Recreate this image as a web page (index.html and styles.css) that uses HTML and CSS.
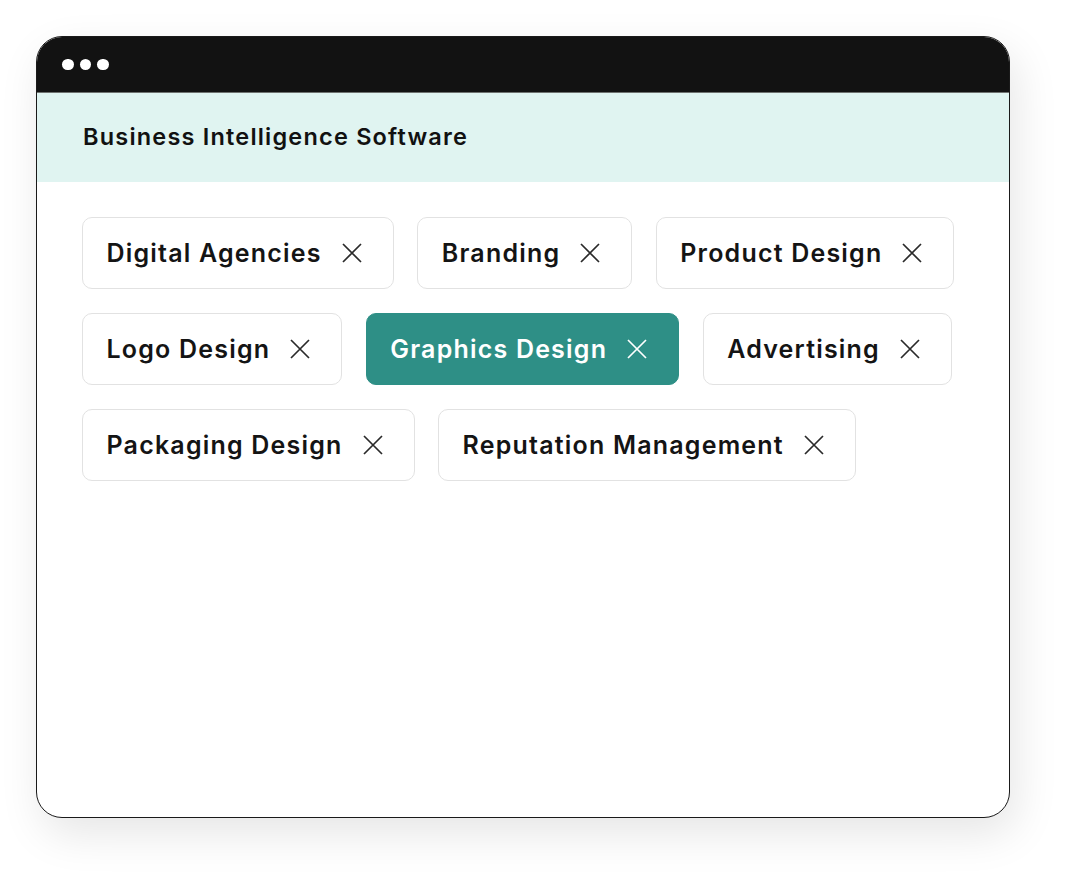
FILE: index.html
```html
<!DOCTYPE html>
<html lang="en">
<head>
<meta charset="utf-8">
<title>Tags</title>
<link rel="stylesheet" href="styles.css">
</head>
<body>
<div class="window">
  <div class="titlebar">
    <span class="dot"></span><span class="dot"></span><span class="dot"></span>
  </div>
  <div class="header">Business Intelligence Software</div>
  <div class="tags">
    <div class="row">
      <span class="tag">Digital Agencies<svg class="x" viewBox="0 0 20 20"><path d="M1 1L19 19M19 1L1 19"/></svg></span>
      <span class="tag">Branding<svg class="x" viewBox="0 0 20 20"><path d="M1 1L19 19M19 1L1 19"/></svg></span>
      <span class="tag">Product Design<svg class="x" viewBox="0 0 20 20"><path d="M1 1L19 19M19 1L1 19"/></svg></span>
    </div>
    <div class="row">
      <span class="tag">Logo Design<svg class="x" viewBox="0 0 20 20"><path d="M1 1L19 19M19 1L1 19"/></svg></span>
      <span class="tag active">Graphics Design<svg class="x" viewBox="0 0 20 20"><path d="M1 1L19 19M19 1L1 19"/></svg></span>
      <span class="tag">Advertising<svg class="x" viewBox="0 0 20 20"><path d="M1 1L19 19M19 1L1 19"/></svg></span>
    </div>
    <div class="row">
      <span class="tag">Packaging Design<svg class="x" viewBox="0 0 20 20"><path d="M1 1L19 19M19 1L1 19"/></svg></span>
      <span class="tag">Reputation Management<svg class="x" viewBox="0 0 20 20"><path d="M1 1L19 19M19 1L1 19"/></svg></span>
    </div>
  </div>
</div>
</body>
</html>
```

FILE: styles.css
```css
html, body {
  margin: 0;
  padding: 0;
  background: #ffffff;
}
body {
  font-family: Inter, "Liberation Sans", sans-serif;
  width: 1065px;
  height: 873px;
  padding-top: 36px;
  padding-left: 36px;
  box-sizing: border-box;
}
.window {
  width: 974px;
  height: 782px;
  box-sizing: border-box;
  border: 1px solid #1a1a1a;
  border-radius: 26px;
  overflow: hidden;
  background: #ffffff;
  box-shadow: 6px 16px 44px rgba(0, 0, 0, 0.10);
}
.titlebar {
  height: 55px;
  background: #121212;
  display: flex;
  align-items: center;
  gap: 6px;
  padding-left: 25px;
  border-bottom: 1px solid #6e7270;
}
.dot {
  width: 11.5px;
  height: 11.5px;
  border-radius: 50%;
  background: #ffffff;
}
.header {
  height: 89px;
  background: #e0f4f1;
  display: flex;
  align-items: center;
  padding-left: 46px;
  padding-bottom: 2px;
  box-sizing: border-box;
  font-size: 23.5px;
  font-weight: 600;
  letter-spacing: 1.2px;
  color: #111111;
}
.tags {
  padding: 35px 0 0 45px;
  display: flex;
  flex-direction: column;
  gap: 24px;
}
.row {
  display: flex;
  gap: 23.5px;
}
.tag {
  height: 72px;
  box-sizing: border-box;
  border: 1.5px solid #e2e2e2;
  border-radius: 10px;
  display: inline-flex;
  align-items: center;
  padding: 0 31px 0 23.5px;
  font-size: 25px;
  font-weight: 600;
  letter-spacing: 1.2px;
  color: #141414;
}
.tag .x {
  width: 20px;
  height: 20px;
  margin-left: 20px;
  stroke: #2a2a2a;
  stroke-width: 1.7;
  fill: none;
}
.tag.active {
  background: #2e8f86;
  border-color: #2e8f86;
  color: #ffffff;
}
.tag.active .x {
  stroke: #ffffff;
}
```
